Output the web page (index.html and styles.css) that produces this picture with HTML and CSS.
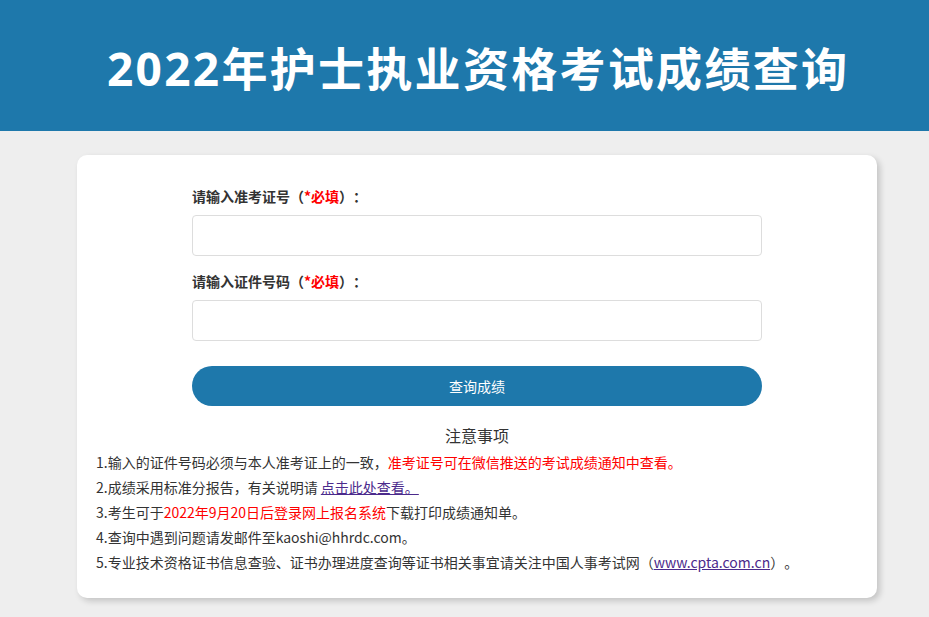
FILE: index.html
```html
<!DOCTYPE html>
<html lang="zh-CN">
<head>
<meta charset="utf-8">
<title>2022年护士执业资格考试成绩查询</title>
<link rel="stylesheet" href="styles.css">
</head>
<body>
<header class="banner">
  <h1 class="banner-title">2022年护士执业资格考试成绩查询</h1>
</header>
<main class="card">
  <form class="form">
    <label class="label">请输入准考证号（<span class="req">*必填</span>）：</label>
    <input class="input" type="text">
    <label class="label">请输入证件号码（<span class="req">*必填</span>）：</label>
    <input class="input" type="text">
    <button class="btn" type="button">查询成绩</button>
  </form>
  <section class="notice">
    <h2 class="notice-title">注意事项</h2>
    <p class="line">1.输入的证件号码必须与本人准考证上的一致，<span class="red">准考证号可在微信推送的考试成绩通知中查看。</span></p>
    <p class="line">2.成绩采用标准分报告，有关说明请 <a class="link" href="#">点击此处查看。</a></p>
    <p class="line">3.考生可于<span class="red">2022年9月20日后登录网上报名系统</span>下载打印成绩通知单。</p>
    <p class="line">4.查询中遇到问题请发邮件至kaoshi@hhrdc.com。</p>
    <p class="line">5.专业技术资格证书信息查验、证书办理进度查询等证书相关事宜请关注中国人事考试网（<a class="link" href="#">www.cpta.com.cn</a>）。</p>
  </section>
</main>
</body>
</html>
```
FILE: styles.css
```css
* { box-sizing: border-box; }
html, body { margin: 0; padding: 0; }
body {
  background: #eeeeee;
  font-family: "Noto Sans CJK SC", "Noto Sans", sans-serif;
  color: #333;
  width: 929px;
  height: 617px;
  overflow: hidden;
  text-spacing-trim: space-all;
}
.banner {
  background: #1e78ab;
  height: 131px;
  display: flex;
  align-items: center;
  padding-left: 107px;
}
.banner-title {
  margin: 0;
  color: #fff;
  font-family: "Open Sans", "Noto Sans CJK SC", sans-serif;
  font-weight: 700;
  font-size: 46px;
  line-height: 1;
  letter-spacing: 2.3px;
  padding-top: 4px;
}
.card {
  background: #fff;
  width: 800px;
  margin: 24px 0 0 77px;
  border-radius: 10px;
  box-shadow: 3px 3px 6px rgba(0,0,0,0.18);
  padding: 31px 0 23px;
}
.form {
  display: flex;
  flex-direction: column;
  width: 570px;
  margin-left: 115px;
}
.label {
  font-size: 14px;
  font-weight: 700;
  line-height: 20px;
  color: #333;
  margin-bottom: 9px;
}
.req { color: #f00; }
.input {
  height: 41px;
  border: 1px solid #ddd;
  border-radius: 4px;
  margin: 0 0 15px 0;
  padding: 0 10px;
  font-size: 14px;
  background: #fff;
}
.input + .btn { margin-top: 10px; }
.btn {
  height: 40px;
  border: none;
  border-radius: 20px;
  background: #1e78ab;
  color: #fff;
  font-family: inherit;
  font-size: 14px;
}
.notice {
  padding-left: 19px;
  margin-top: 18px;
}
.notice-title {
  margin: 0 0 4px;
  text-align: center;
  font-size: 16px;
  font-weight: 400;
  line-height: 22px;
  color: #333;
  padding-right: 19px;
}
.line {
  margin: 0;
  font-size: 14px;
  line-height: 25px;
  color: #333;
}
.red { color: #f00; }
.link { color: #4b2a8c; text-decoration: underline; }
```
